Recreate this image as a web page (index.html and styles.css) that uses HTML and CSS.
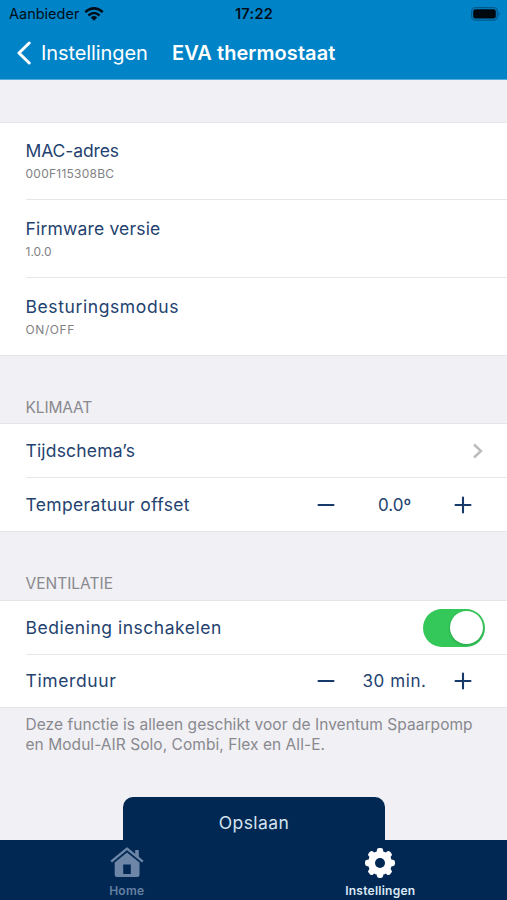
FILE: index.html
```html
<!DOCTYPE html>
<html lang="nl">
<head>
<meta charset="utf-8">
<meta name="viewport" content="width=device-width, initial-scale=1">
<title>EVA thermostaat</title>
<link rel="stylesheet" href="styles.css">
</head>
<body>
<div class="screen">
  <header class="header">
    <div class="status">
      <div class="carrier"><span class="carrier-name">Aanbieder</span>
        <svg class="wifi" width="20" height="14" viewBox="0 0 20 14"><g fill="none" stroke="#000d18" stroke-width="2.5"><path d="M1.2 5.1Q10-2.4 18.8 5.1"/><path d="M4.4 8.5Q10 3.6 15.6 8.5"/></g><path d="M6.7 10.5Q10 7.7 13.3 10.5L10 13.8Z" fill="#000d18"/></svg>
      </div>
      <span class="time">17:22</span>
      <svg class="battery" width="30" height="14" viewBox="0 0 30 14"><rect x=".7" y=".7" width="25.6" height="12.4" rx="3.8" fill="none" stroke="#00598d" stroke-width="1.3"/><rect x="2.2" y="2.2" width="22.6" height="9.4" rx="2.3" fill="#000810"/><path d="M27.5 4.8Q29.8 6.9 27.5 9Z" fill="#00598d"/></svg>
    </div>
    <nav class="nav">
      <svg class="back-icon" width="16" height="24" viewBox="0 0 16 24"><path d="M13.2 2L3 12l10.2 10" fill="none" stroke="#fff" stroke-width="3" stroke-linecap="round" stroke-linejoin="round"/></svg>
      <span class="back">Instellingen</span>
      <h1 class="title">EVA thermostaat</h1>
    </nav>
  </header>
  <main class="content">
    <section class="group">
      <div class="row tall"><span class="label mac">MAC-adres</span><span class="detail mac-value">000F115308BC</span></div>
      <div class="row tall"><span class="label firmware">Firmware versie</span><span class="detail version">1.0.0</span></div>
      <div class="row tall"><span class="label mode">Besturingsmodus</span><span class="detail mode-value">ON/OFF</span></div>
    </section>
    <h2 class="heading"><span class="klimaat">KLIMAAT</span></h2>
    <section class="group">
      <div class="row"><span class="label schedules">Tijdschema’s</span>
        <svg class="chevron" width="12" height="16" viewBox="0 0 12 16"><path d="M2 1.5L9 8l-7 6.5" fill="none" stroke="#bcbcbf" stroke-width="2.4"/></svg></div>
      <div class="row"><span class="label offset">Temperatuur offset</span>
        <div class="stepper"><svg width="18" height="18" viewBox="0 0 18 18"><path d="M1.5 9h15" class="sign"/></svg><span class="value">0.0º</span><svg width="18" height="18" viewBox="0 0 18 18"><path d="M1.5 9h15M9 1.5v15" class="sign"/></svg></div></div>
    </section>
    <h2 class="heading second"><span>VENTILATIE</span></h2>
    <section class="group compact">
      <div class="row"><span class="label control">Bediening inschakelen</span><div class="switch"><div class="knob"></div></div></div>
      <div class="row"><span class="label timer">Timerduur</span>
        <div class="stepper"><svg width="18" height="18" viewBox="0 0 18 18"><path d="M1.5 9h15" class="sign"/></svg><span class="value minutes">30 min.</span><svg width="18" height="18" viewBox="0 0 18 18"><path d="M1.5 9h15M9 1.5v15" class="sign"/></svg></div></div>
    </section>
    <p class="note">Deze functie is alleen geschikt voor de Inventum Spaarpomp<br>en Modul-AIR Solo, Combi, Flex en All-E.</p>
  </main>
  <div class="save"><span>Opslaan</span></div>
  <footer class="tabs">
    <div class="tab home">
      <svg width="34" height="32" viewBox="0 0 34 32"><path d="M1.2 14.6L17 1.6l15.8 13" fill="none" stroke="#6d86a8" stroke-width="2.5" stroke-linejoin="round"/><path d="M25.2 3h3.6v9l-3.600-3z" fill="#6d86a8"/><path fill-rule="evenodd" d="M4.700 15.500L17 5.400l12.500 10.100V27.500q0 2.500-2.500 2.500H7.200Q4.700 30 4.700 27.500ZM13.200 17.500v9.500h7.600v-9.500Z" fill="#6d86a8"/></svg>
      <span class="tab-text home-text">Home</span>
    </div>
    <div class="tab settings">
      <svg width="32" height="32" viewBox="-16 -16 32 32"><g fill="#fff"><circle r="12"/><rect x="-3.2" y="-15" width="6.4" height="30" rx="2.4"/><rect x="-3.2" y="-15" width="6.4" height="30" rx="2.4" transform="rotate(45)"/><rect x="-3.2" y="-15" width="6.4" height="30" rx="2.4" transform="rotate(90)"/><rect x="-3.2" y="-15" width="6.4" height="30" rx="2.4" transform="rotate(135)"/></g><circle r="5" fill="#002853"/></svg>
      <span class="tab-text settings-text">Instellingen</span>
    </div>
  </footer>
</div>
</body>
</html>
```

FILE: styles.css
```css
* { box-sizing: border-box; }
body { margin: 0; font-family: Inter, "Liberation Sans", sans-serif; background: #f0f0f5; }
.screen { width: 507px; height: 900px; display: flex; flex-direction: column; overflow: hidden; }
.screen span, .title, .note { white-space: nowrap; }
svg { display: block; flex: none; }
.header { height: 80px; background: #0084c7; border-bottom: 1px solid #55add9; flex: none; }
.status { height: 28px; display: grid; grid-template-columns: 1fr auto 1fr; align-items: center; padding: 0 6px 0 9px; color: #000d18; }
.carrier { display: flex; align-items: center; gap: 5px; font-size: 14.5px; padding-bottom: 1px; }
.time { font-size: 14.5px; font-weight: 600; letter-spacing: .3px; margin-right: 2px; padding-bottom: 1px; }
.battery { justify-self: end; margin-bottom: 1px; }
.nav { height: 50px; display: flex; align-items: center; color: #fff; padding: 0 0 1px 16px; }
.back { font-size: 20px; margin-left: 9px; width: 131px; letter-spacing: -.09px; }
.title { margin: 0; font-size: 20px; font-weight: 600; letter-spacing: .06px; }
.content { padding-top: 43px; flex: 1; }
.group { background: #fff; box-shadow: 0 -1px #e4e4e9, 0 1px #e4e4e9; padding-left: 25.5px; }
.row { height: 53px; display: flex; align-items: center; justify-content: space-between; padding-right: 25px; }
.row + .row { border-top: 1px solid #e6e6e9; height: 54px; }
.compact .row + .row { height: 53px; }
.row.tall { height: 76px; flex-direction: column; align-items: flex-start; justify-content: flex-start; padding-top: 16px; }
.row.tall + .row.tall { height: 78px; padding-top: 17px; }
.label { font-size: 17.5px; line-height: 24px; color: #24426f; }
.mac { letter-spacing: -.1px; }
.firmware { letter-spacing: .18px; }
.mode { letter-spacing: .6px; }
.schedules { letter-spacing: .17px; }
.offset { letter-spacing: .34px; }
.control { letter-spacing: .51px; }
.timer { letter-spacing: .61px; }
.detail { font-size: 12px; line-height: 16px; margin-top: 3px; color: #818184; }
.mac-value { letter-spacing: .25px; }
.mode-value { letter-spacing: .6px; }
.heading { height: 69px; margin: 0; padding: 43px 0 0 25.5px; font-size: 15.5px; line-height: 20px; font-weight: 400; color: #89898e; }
.klimaat { letter-spacing: -.15px; }
.heading.second { height: 70px; }
.stepper { display: flex; align-items: center; margin-right: 10px; }
.value { width: 119px; text-align: center; font-size: 17px; color: #24426f; }
.minutes { letter-spacing: .6px; }
.sign { fill: none; stroke: #173a6b; stroke-width: 2.1; stroke-linecap: round; }
.chevron { margin-right: -2px; }
.switch { width: 62px; height: 38px; border-radius: 19px; background: #34c759; padding: 2.5px; margin-right: -3px; display: flex; justify-content: flex-end; }
.knob { width: 33px; height: 33px; border-radius: 50%; background: #fff; box-shadow: 0 1px 3px #0003; }
.note { margin: 0; padding: 8px 0 0 25.5px; font-size: 15.5px; line-height: 20px; letter-spacing: .05px; color: #89898e; }
.save { width: 262px; height: 43px; margin-left: 123px; flex: none; background: #002853; border-radius: 10px 10px 0 0; display: flex; align-items: center; justify-content: center; color: #d5e3f0; font-size: 17.5px; letter-spacing: .45px; padding-top: 8px; }
.tabs { height: 60px; flex: none; background: #002853; display: grid; grid-template-columns: 1fr 1fr; }
.tab { display: flex; flex-direction: column; align-items: center; padding-top: 7px; }
.tab-text { font-size: 12px; line-height: 14px; margin-top: 5px; font-weight: 600; letter-spacing: .25px; }
.home-text { color: #6680a2; }
.settings-text { color: #dce8f5; }
```
